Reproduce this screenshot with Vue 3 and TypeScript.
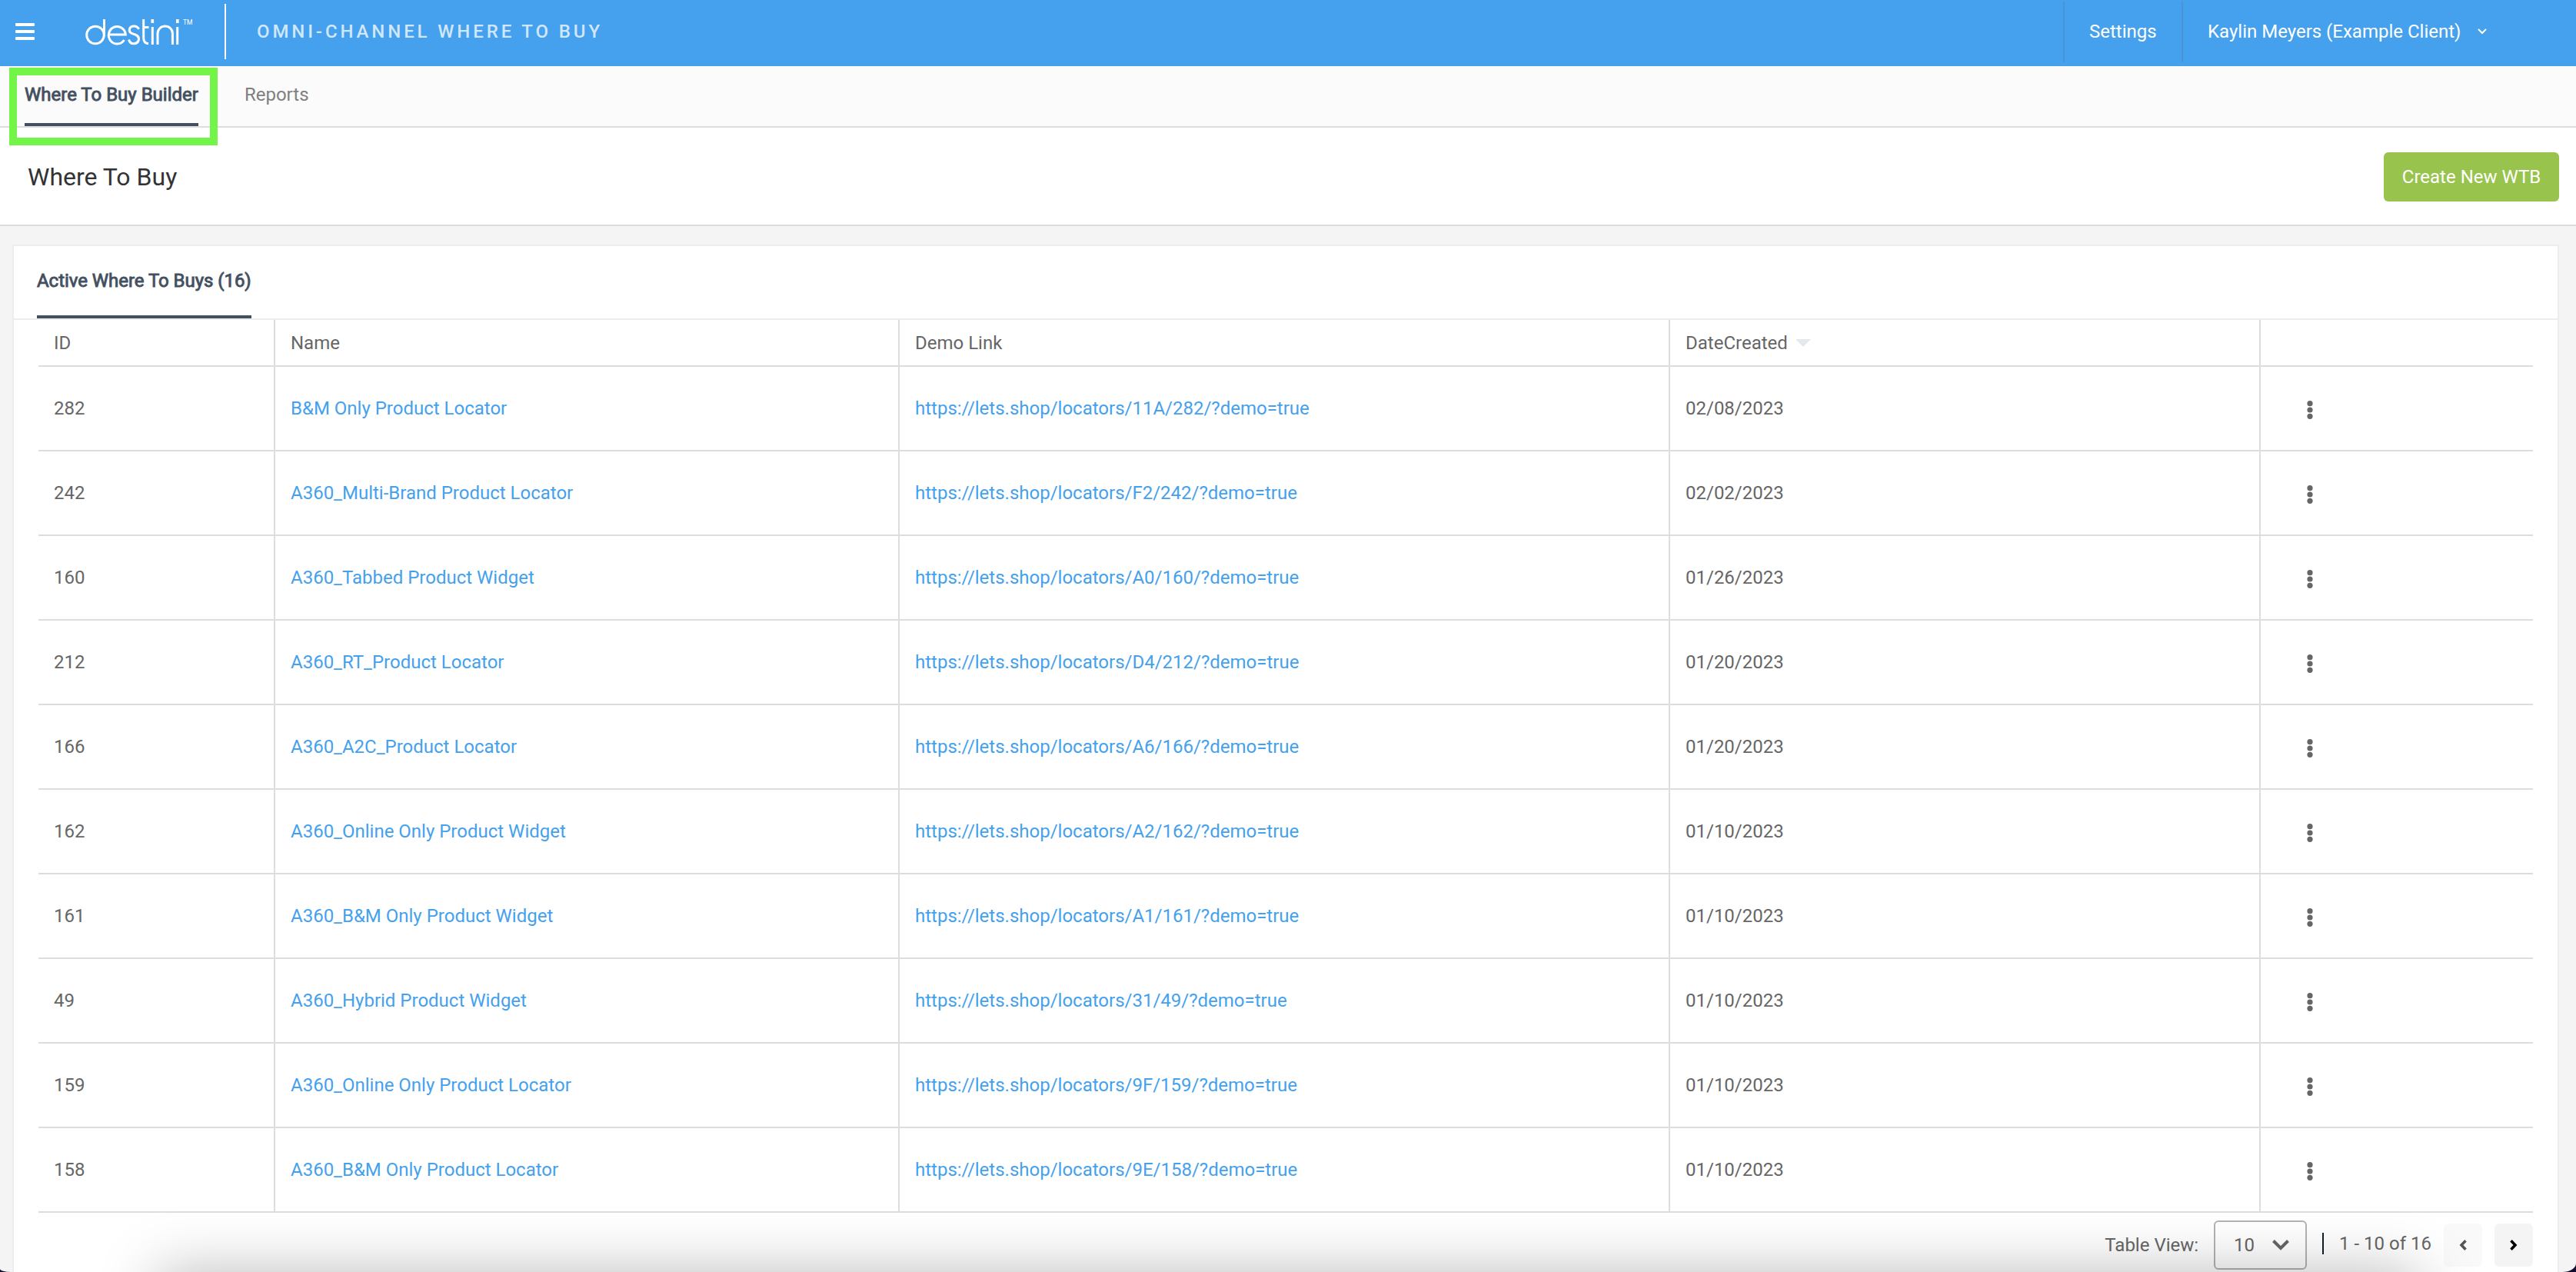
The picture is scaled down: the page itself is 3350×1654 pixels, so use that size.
<script setup lang="ts">
interface Locator {
  id: number
  name: string
  path: string
  created: string
}

const rows: Locator[] = [
  { id: 282, name: 'B&M Only Product Locator', path: '11A/282', created: '02/08/2023' },
  { id: 242, name: 'A360_Multi-Brand Product Locator', path: 'F2/242', created: '02/02/2023' },
  { id: 160, name: 'A360_Tabbed Product Widget', path: 'A0/160', created: '01/26/2023' },
  { id: 212, name: 'A360_RT_Product Locator', path: 'D4/212', created: '01/20/2023' },
  { id: 166, name: 'A360_A2C_Product Locator', path: 'A6/166', created: '01/20/2023' },
  { id: 162, name: 'A360_Online Only Product Widget', path: 'A2/162', created: '01/10/2023' },
  { id: 161, name: 'A360_B&M Only Product Widget', path: 'A1/161', created: '01/10/2023' },
  { id: 49, name: 'A360_Hybrid Product Widget', path: '31/49', created: '01/10/2023' },
  { id: 159, name: 'A360_Online Only Product Locator', path: '9F/159', created: '01/10/2023' },
  { id: 158, name: 'A360_B&M Only Product Locator', path: '9E/158', created: '01/10/2023' },
]

const demoUrl = (row: Locator): string => `https://lets.shop/locators/${row.path}/?demo=true`
</script>

<template>
  <div class="window">
    <div class="app">
      <header class="topbar">
        <svg class="menu" width="25" height="22" viewBox="0 0 25 22" fill="#fff">
          <rect x="0" y="0" width="25" height="4" rx="1" />
          <rect x="0" y="9" width="25" height="4" rx="1" />
          <rect x="0" y="18" width="25" height="4" rx="1" />
        </svg>
        <svg class="logo" width="142" height="36" viewBox="0 0 142 36" role="img" aria-label="destini">
          <g fill="none" stroke="#fff" stroke-width="3">
            <circle cx="13" cy="22.500" r="11.300" />
            <path d="M24.500 2V24" />
            <path d="M30.500 22H52.300A11 11.300 0 1 0 50.500 29" />
            <path d="M69.500 15C68 11.500 65 10.800 62.500 11C56.500 11.500 56 18 59.500 20C62 21.500 65 21.500 67.500 23.500C71.500 27 69 33.500 63.500 33.800C60 34 57.500 32 56.500 28.500" />
            <path d="M75.700 2V26C75.700 30.500 77.500 33.500 82 33.800M75.700 12.500H82.500" />
            <path d="M87.300 12V35" />
            <path d="M94 35V20.500A9.700 9.500 0 0 1 113.400 20.500V35" />
            <path d="M119.700 12V35" />
          </g>
          <path d="M85.500 2h3.600v5h-3.600zM118 2h3.600v5h-3.600z" fill="#fff" />
          <text x="127" y="9" font-size="8.500" fill="#fff">TM</text>
        </svg>
        <span class="rule"></span>
        <span class="product">OMNI-CHANNEL WHERE TO BUY</span>
        <div class="account">
          <a class="settings">Settings</a>
          <a class="user">
            Kaylin Meyers (Example Client)
            <svg width="12" height="8" viewBox="0 0 12 8" fill="none" stroke="#fff" stroke-width="2">
              <path d="M1 1l5 5 5-5" />
            </svg>
          </a>
        </div>
      </header>

      <nav class="nav">
        <a class="tab active">Where To Buy Builder</a>
        <a class="tab">Reports</a>
        <span class="highlight"></span>
      </nav>

      <section class="heading">
        <h1>Where To Buy</h1>
        <button class="create">Create New WTB</button>
      </section>

      <main class="card">
        <div class="card-tabs">
          <span class="card-tab">Active Where To Buys (16)</span>
        </div>
        <div class="table">
          <div class="row head">
            <div class="cell">ID</div>
            <div class="cell">Name</div>
            <div class="cell">Demo Link</div>
            <div class="cell">DateCreated <i class="sort"></i></div>
            <div class="cell"></div>
          </div>
          <div v-for="row in rows" :key="row.id" class="row">
            <div class="cell">{{ row.id }}</div>
            <div class="cell link">{{ row.name }}</div>
            <div class="cell link">{{ demoUrl(row) }}</div>
            <div class="cell">{{ row.created }}</div>
            <div class="cell">
              <svg class="dots" width="8" height="24" viewBox="0 0 8 24" fill="#666">
                <circle cx="4" cy="3.700" r="3.600" />
                <circle cx="4" cy="12" r="3.600" />
                <circle cx="4" cy="20.300" r="3.600" />
              </svg>
            </div>
          </div>
        </div>
        <footer class="pager">
          <span class="view">Table View:</span>
          <div class="select">
            10
            <svg width="22" height="14" viewBox="0 0 22 14" fill="none" stroke="#666" stroke-width="4">
              <path d="M1.500 1.500L11 11l9.500-9.500" />
            </svg>
          </div>
          <span class="bar"></span>
          <span class="range">1 - 10 of 16</span>
          <button class="page prev">
            <svg width="10" height="14" viewBox="0 0 10 14" fill="none" stroke="#555" stroke-width="3.500">
              <path d="M8.500 1.200L3 7l5.500 5.800" />
            </svg>
          </button>
          <button class="page">
            <svg width="10" height="14" viewBox="0 0 10 14" fill="none" stroke="#000" stroke-width="3.500">
              <path d="M1.500 1.200L7 7l-5.500 5.800" />
            </svg>
          </button>
        </footer>
      </main>
      <div class="shade"></div>
    </div>
  </div>
</template>

<style>
body {
  margin: 0;
  overflow: hidden;
}
</style>

<style scoped>
.window {
  width: 3350px;
  height: 1654px;
  background: #120a35;
  overflow: hidden;
  font-family: Roboto, sans-serif;
  font-size: 24px;
  color: #666;
}
.app {
  position: relative;
  height: 1654px;
  background: #f4f4f4;
  border-radius: 0 0 18px 14px / 0 0 11px 4px;
  overflow: hidden;
}
.topbar {
  display: flex;
  align-items: center;
  height: 86px;
  box-sizing: border-box;
  padding: 0 0 4px 20px;
  background: #45a1ed;
  color: #fff;
}
.menu {
  margin-right: 66px;
}
.logo {
  flex: none;
}
.rule {
  width: 2px;
  height: 72px;
  margin: 0 40px 0 39px;
  background: #fff;
}
.product {
  color: rgba(255, 255, 255, 0.76);
  font-weight: 500;
  letter-spacing: 3.88px;
}
.account {
  display: flex;
  height: 80px;
  margin-left: auto;
}
.account a {
  display: flex;
  align-items: center;
  box-sizing: border-box;
  border-left: 2px solid #4b92d8;
}
.settings {
  width: 154px;
  padding-left: 32px;
}
.user {
  width: 513px;
  padding-left: 32px;
  gap: 22px;
}
.nav {
  position: relative;
  display: flex;
  gap: 60px;
  height: 80px;
  box-sizing: border-box;
  padding-left: 32px;
  background: #fbfbfb;
  border-bottom: 2px solid #ddd;
}
.tab {
  box-sizing: border-box;
  height: 78px;
  line-height: 74px;
  color: #808080;
}
.tab.active {
  color: #44505f;
  -webkit-text-stroke: 0.9px #44505f;
  border-bottom: 4px solid #44505f;
}
.highlight {
  position: absolute;
  left: 12px;
  top: 2px;
  width: 251px;
  height: 81px;
  border: 10px solid #72f548;
}
.heading {
  display: flex;
  align-items: center;
  justify-content: space-between;
  height: 128px;
  box-sizing: border-box;
  padding: 2px 22px 0 36px;
  background: #fff;
  border-bottom: 2px solid #ddd;
}
h1 {
  margin: 0;
  font-size: 32px;
  font-weight: 400;
  color: #333;
}
.create {
  width: 228px;
  height: 64px;
  padding: 0;
  border: 0;
  border-radius: 6px;
  background: #98c34d;
  color: #fff;
  font: inherit;
}
.card {
  height: 1400px;
  box-sizing: border-box;
  margin: 24px 22px 0 16px;
  background: #fff;
  border: 2px solid #ededed;
  border-radius: 3px;
}
.card-tabs {
  display: flex;
  height: 96px;
  box-sizing: border-box;
  padding-left: 30px;
  border-bottom: 2px solid #ededed;
}
.card-tab {
  line-height: 90px;
  letter-spacing: -0.04px;
  color: #44505f;
  -webkit-text-stroke: 0.9px #44505f;
  border-bottom: 4px solid #44505f;
}
.table {
  margin: 0 32px;
}
.row {
  display: grid;
  grid-template-columns: 308px 812px 1002px 768px 354px;
  height: 110px;
  box-sizing: border-box;
  border-bottom: 2px solid #ddd;
}
.row.head {
  height: 61px;
}
.cell {
  display: flex;
  align-items: center;
  padding-left: 20px;
  border-right: 2px solid #ddd;
}
.cell:last-child {
  border-right: 0;
  padding-left: 60px;
}
.link {
  color: #45a1ed;
}
.sort {
  margin-left: 10px;
  border: 10px solid transparent;
  border-top-color: #e4e8ee;
  border-bottom: 0;
}
.dots {
  margin-top: 4px;
}
.pager {
  display: flex;
  align-items: center;
  justify-content: flex-end;
  height: 64px;
  margin: 10px 32px 0;
}
.select {
  display: flex;
  align-items: center;
  justify-content: space-between;
  width: 121px;
  height: 64px;
  box-sizing: border-box;
  margin: 0 20px;
  padding: 0 21px 0 24px;
  border: 2px solid #b3b3b3;
  border-radius: 6px;
}
.bar {
  width: 2px;
  height: 28px;
  margin: -4px 20px 0 0;
  background: #141d2b;
}
.range {
  margin-top: -4px;
}
.page {
  display: flex;
  align-items: center;
  justify-content: center;
  width: 50px;
  height: 56px;
  margin-left: 16px;
  padding: 0;
  border: 0;
  border-radius: 6px;
  background: #f4f4f4;
}
.page.prev {
  background: #f9f9f9;
}
.shade {
  position: absolute;
  left: 205px;
  top: 1654px;
  width: 2940px;
  height: 160px;
  box-shadow: 0 0 78px rgba(0, 0, 0, 0.27);
}
</style>
